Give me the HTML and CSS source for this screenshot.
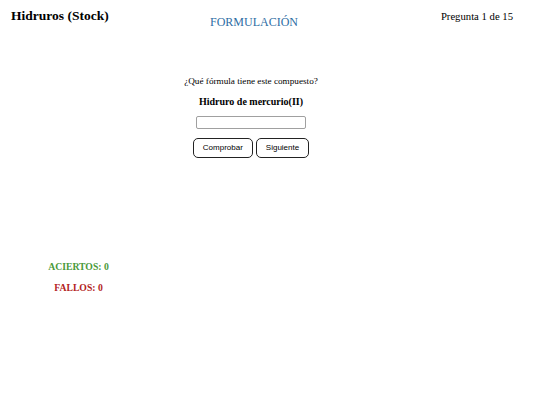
FILE: index.html
```html
<!DOCTYPE html>
<html lang="es">
<head>
<meta charset="utf-8">
<link rel="stylesheet" href="styles.css">
</head>
<body>
<header class="top">
  <div class="app-title">Hidruros (Stock)</div>
  <div class="section-title">FORMULACIÓN</div>
  <div class="counter">Pregunta 1 de 15</div>
</header>
<main class="quiz">
  <p class="prompt">¿Qué fórmula tiene este compuesto?</p>
  <p class="compound">Hidruro de mercurio(II)</p>
  <input class="answer" type="text">
  <div class="actions">
    <button class="btn">Comprobar</button>
    <button class="btn">Siguiente</button>
  </div>
</main>
<aside class="score">
  <div class="hits">ACIERTOS: 0</div>
  <div class="misses">FALLOS: 0</div>
</aside>
</body>
</html>
```
FILE: styles.css
```css
html, body {
  margin: 0;
  padding: 0;
  background: #fff;
  font-family: "Liberation Serif", "Times New Roman", serif;
  color: #000;
}
.top {
  display: flex;
  align-items: flex-start;
  padding: 0 27px 0 11px;
  height: 40px;
  box-sizing: border-box;
}
.app-title {
  width: 149px;
  font-size: 13.5px;
  line-height: 16px;
  font-weight: bold;
  margin-top: 8.4px;
}
.section-title {
  width: 188px;
  text-align: center;
  color: #2e6da4;
  font-size: 12px;
  line-height: 14px;
  margin-top: 14.9px;
}
.counter {
  flex: 1;
  text-align: right;
  font-size: 10.7px;
  line-height: 13px;
  margin-top: 10px;
}
.quiz {
  margin: 36.4px 0 0 160px;
  width: 182px;
  display: flex;
  flex-direction: column;
  align-items: center;
}
.prompt {
  margin: 0;
  font-size: 9.2px;
  line-height: 11px;
}
.compound {
  margin: 8.2px 0 0;
  font-size: 10px;
  line-height: 12px;
  font-weight: bold;
}
.answer {
  margin: 8.4px 0 0;
  width: 110px;
  height: 13px;
  box-sizing: border-box;
  border: 1px solid #a0a0a0;
  border-radius: 2px;
  padding: 0;
}
.actions {
  display: flex;
  gap: 3px;
  margin-top: 9px;
}
.btn {
  font-family: "Liberation Sans", Arial, sans-serif;
  font-size: 8px;
  height: 20px;
  padding: 0 9px;
  background: #fff;
  border: 1px solid #222;
  border-radius: 5px;
  color: #000;
}
.score {
  margin: 102.6px 0 0 0;
  width: 157px;
  text-align: center;
  font-size: 9.7px;
  line-height: 11px;
  font-weight: bold;
}
.hits {
  color: #4a9a3a;
}
.misses {
  color: #b32222;
  margin-top: 10px;
}
```
